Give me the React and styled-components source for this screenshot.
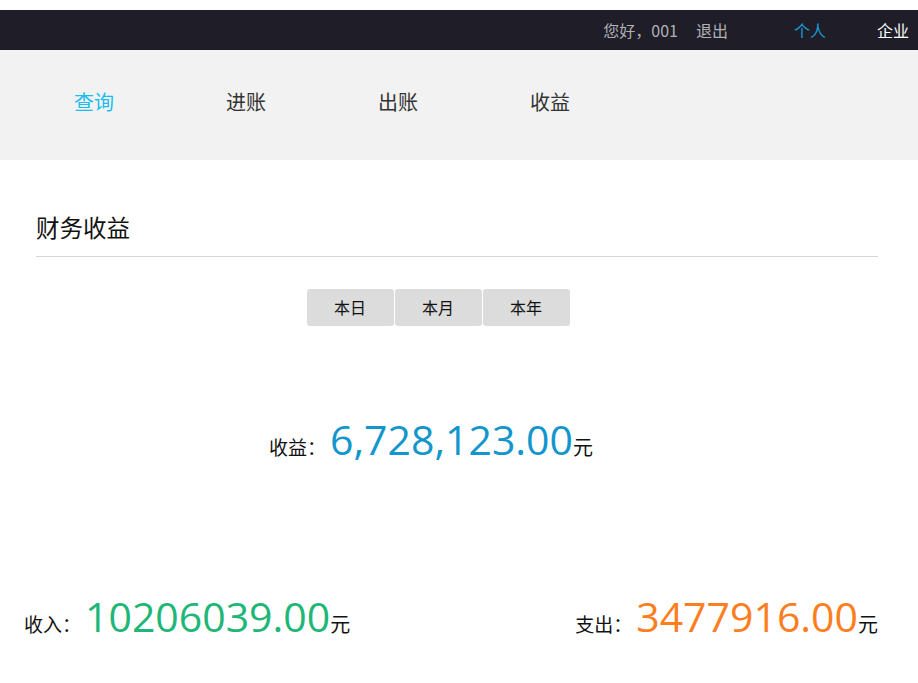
import React from "react";
import styled, { createGlobalStyle } from "styled-components";

const GlobalStyle = createGlobalStyle`
  body {
    margin: 0;
    background: #fff;
    font-family: "Noto Sans CJK SC", "Noto Sans", sans-serif;
  }
`;

const Page = styled.div`
  width: 918px;
  padding-top: 10px;
`;

const TopBar = styled.div`
  height: 40px;
  background: #1e1d28;
  display: flex;
  align-items: center;
  justify-content: flex-end;
  padding-right: 9px;
  font-size: 16px;
`;

const TopText = styled.span`
  color: ${(props) => props.color || "#b0b0b4"};
  margin-left: ${(props) => props.gap || 0}px;
`;

const Nav = styled.div`
  height: 110px;
  background: #f2f2f2;
  display: flex;
  align-items: center;
  padding: 0 0 8px 74px;
  box-sizing: border-box;
`;

const NavItem = styled.span`
  width: 152px;
  font-size: 20px;
  color: ${(props) => (props.active ? "#1cbdee" : "#333")};
`;

const Content = styled.div`
  padding: 0 40px 0 36px;
`;

const Title = styled.h3`
  margin: 0;
  padding-top: 51px;
  height: 45px;
  font-size: 23.5px;
  font-weight: normal;
  color: #111;
  line-height: 32px;
  border-bottom: 1px solid #d6d6d6;
`;

const Tabs = styled.div`
  display: flex;
  justify-content: center;
  gap: 1px;
  margin-top: 32px;
  padding-right: 38px;
`;

const Tab = styled.span`
  width: 87px;
  height: 37px;
  background: #dcdcdc;
  border-radius: 3px;
  display: flex;
  align-items: center;
  justify-content: center;
  padding-bottom: 1px;
  box-sizing: border-box;
  font-size: 16px;
  color: #111;
`;

const Profit = styled.div`
  display: flex;
  justify-content: center;
  align-items: baseline;
  margin-top: 89px;
  padding-right: 52px;
`;

const Label = styled.span`
  font-size: 19px;
  color: #111;
  margin-right: 4px;
`;

const Amount = styled.span`
  font-family: "Open Sans", "Noto Sans", sans-serif;
  font-size: 41px;
  line-height: 48px;
  color: ${(props) => props.color};
`;

const Unit = styled.span`
  font-size: 20px;
  color: #111;
`;

const Bottom = styled.div`
  display: flex;
  justify-content: space-between;
  align-items: baseline;
  margin-top: 129px;
  padding: 0 40px 0 24px;
`;

const Stat = styled.div`
  display: flex;
  align-items: baseline;
`;

export default function App() {
  return (
    <Page>
      <GlobalStyle />
      <TopBar>
        <TopText>您好，001</TopText>
        <TopText gap={18}>退出</TopText>
        <TopText gap={66} color="#1a9fd9">个人</TopText>
        <TopText gap={51} color="#fff">企业</TopText>
      </TopBar>
      <Nav>
        <NavItem active>查询</NavItem>
        <NavItem>进账</NavItem>
        <NavItem>出账</NavItem>
        <NavItem>收益</NavItem>
      </Nav>
      <Content>
        <Title>财务收益</Title>
        <Tabs>
          <Tab>本日</Tab>
          <Tab>本月</Tab>
          <Tab>本年</Tab>
        </Tabs>
        <Profit>
          <Label>收益：</Label>
          <Amount color="#1296cc">6,728,123.00</Amount>
          <Unit>元</Unit>
        </Profit>
      </Content>
      <Bottom>
        <Stat>
          <Label>收入：</Label>
          <Amount color="#1fb777">10206039.00</Amount>
          <Unit>元</Unit>
        </Stat>
        <Stat>
          <Label>支出：</Label>
          <Amount color="#fd7e1e">3477916.00</Amount>
          <Unit>元</Unit>
        </Stat>
      </Bottom>
    </Page>
  );
}
